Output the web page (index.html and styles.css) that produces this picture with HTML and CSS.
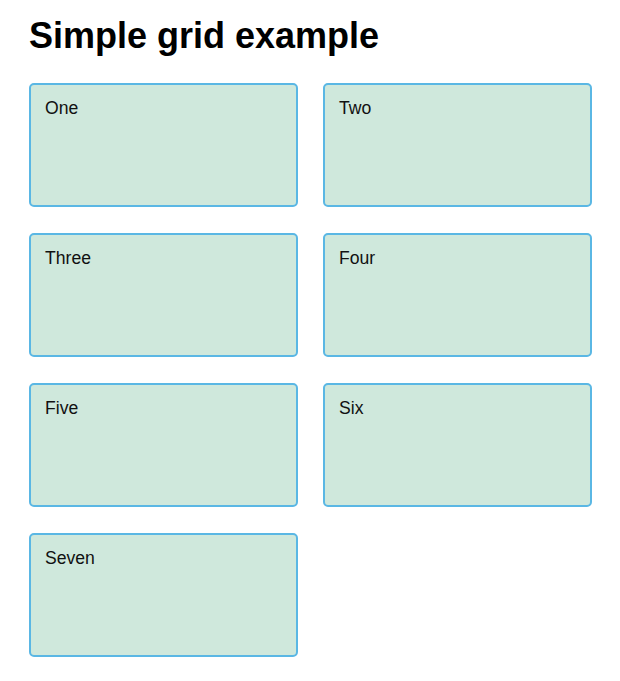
FILE: index.html
```html
<!DOCTYPE html>
<html>
<head>
<meta charset="utf-8">
<link rel="stylesheet" href="styles.css">
</head>
<body>
<h1 class="title">Simple grid example</h1>
<div class="wrapper">
  <div class="box">One</div>
  <div class="box">Two</div>
  <div class="box">Three</div>
  <div class="box">Four</div>
  <div class="box">Five</div>
  <div class="box">Six</div>
  <div class="box">Seven</div>
</div>
</body>
</html>
```
FILE: styles.css
```css
body {
  margin: 0;
  padding: 0 28px 0 29px;
  font-family: "Liberation Sans", Arial, sans-serif;
  background: #fff;
}
.title {
  font-size: 36px;
  font-weight: bold;
  margin: 15px 0 27px 0;
  line-height: 41px;
  color: #000;
}
.wrapper {
  display: grid;
  grid-template-columns: 1fr 1fr;
  column-gap: 25px;
  row-gap: 26px;
}
.box {
  height: 124px;
  box-sizing: border-box;
  border: 2px solid #5ab7e4;
  border-radius: 5px;
  background: #cfe8dc;
  padding: 13px 14px;
  font-size: 17.6px;
  line-height: 20px;
  color: #111;
}
```
